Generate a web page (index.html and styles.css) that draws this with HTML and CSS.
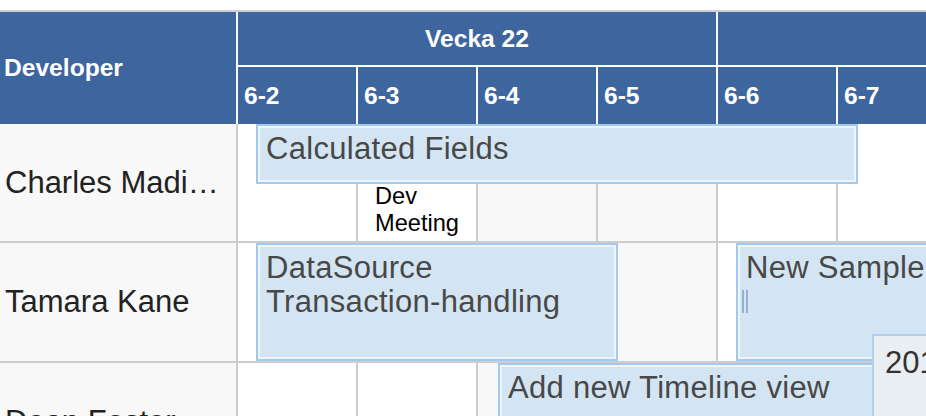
FILE: index.html
```html
<!DOCTYPE html>
<html lang="sv">
<head>
<meta charset="utf-8">
<title>Timeline</title>
<link rel="stylesheet" href="styles.css">
</head>
<body>
<div class="scheduler">
  <div class="header">
    <div class="dev-head">Developer</div>
    <div class="week w22">Vecka 22</div>
    <div class="week w23"></div>
    <div class="day">6-2</div>
    <div class="day">6-3</div>
    <div class="day">6-4</div>
    <div class="day">6-5</div>
    <div class="day">6-6</div>
    <div class="day">6-7</div>
  </div>
  <div class="body">
    <div class="row r1">
      <div class="name"><span>Charles Madison</span></div>
      <div class="cell"></div><div class="cell"></div><div class="cell we"></div><div class="cell we"></div>
      <div class="cell"></div><div class="cell"></div>
      <div class="events">
        <div class="event ev-calc">Calculated Fields</div>
        <div class="meeting">Dev Meeting</div>
      </div>
    </div>
    <div class="row r2">
      <div class="name"><span>Tamara Kane</span></div>
      <div class="cell"></div><div class="cell"></div><div class="cell we"></div><div class="cell we"></div>
      <div class="cell"></div><div class="cell"></div>
      <div class="events">
        <div class="event ev-ds">DataSource Transaction-handling</div>
        <div class="event ev-sample">New Sample<i class="handle"></i></div>
      </div>
    </div>
    <div class="row r3">
      <div class="name"><span>Dean Foster</span></div>
      <div class="cell"></div><div class="cell"></div><div class="cell we"></div><div class="cell we"></div>
      <div class="cell"></div><div class="cell"></div>
      <div class="events">
        <div class="event ev-tl">Add new Timeline view</div>
      </div>
    </div>
  </div>
  <div class="tip">2016-06-06</div>
</div>
</body>
</html>
```
FILE: styles.css
```css
* { box-sizing: border-box; }
html, body { margin: 0; padding: 0; background: #fff; }
body {
  width: 926px;
  height: 416px;
  overflow: hidden;
  font-family: "Liberation Sans", Arial, sans-serif;
}
.scheduler {
  position: relative;
  margin-top: 10px;
  width: 956px;
  border-top: 2px solid #cdcdcd;
}
.header {
  display: grid;
  grid-template-columns: 236px repeat(6, 118px);
  grid-template-rows: 53px 57px;
  gap: 2px;
  background: #fff;
}
.header > div {
  background: #3d659e;
  color: #fff;
  font-weight: bold;
  font-size: 24.6px;
  display: flex;
  align-items: center;
}
.dev-head { grid-row: 1 / 3; padding-left: 4px; }
.week { justify-content: center; }
.w22 { grid-column: 2 / 6; }
.w23 { grid-column: 6 / 8; }
.day { padding-left: 6px; }

.body {
  display: grid;
  row-gap: 2px;
  background: #cdcdcd;
}
.row {
  position: relative;
  display: grid;
  grid-template-columns: 236px repeat(6, 118px);
  column-gap: 2px;
}
.r1 { height: 117px; }
.r2, .r3 { height: 118px; }
.name {
  background: #f8f8f8;
  color: #222;
  font-size: 31px;
  padding: 0 12px 0 5px;
  display: flex;
  align-items: center;
  min-width: 0;
}
.name span {
  min-width: 0;
  white-space: nowrap;
  overflow: hidden;
  text-overflow: ellipsis;
}
.cell { background: #fff; }
.cell.we { background: #f8f8f8; }

.events {
  position: absolute;
  left: 238px;
  top: 0;
  right: 0;
  bottom: 0;
}
.event {
  position: absolute;
  top: 0;
  border: 2px solid #a3c9ef;
  box-shadow: inset 0 0 0 2px #eef5fc;
  background: #d3e5f3;
  color: #484848;
  font-size: 31px;
  letter-spacing: 0.3px;
  line-height: 34px;
  padding: 6px 8px;
  overflow: hidden;
}
.ev-calc { left: 18px; width: 602px; height: 60px; }
.ev-ds { left: 18px; width: 362px; height: 118px; }
.ev-sample { left: 498px; width: 400px; height: 118px; white-space: nowrap; }
.ev-tl { left: 260px; width: 560px; height: 130px; white-space: nowrap; }
.handle {
  position: absolute;
  left: 4px;
  top: 45px;
  width: 6px;
  height: 23px;
  border-left: 2px solid #9aaed0;
  border-right: 2px solid #9aaed0;
}
.meeting {
  position: absolute;
  left: 137px;
  top: 59px;
  width: 100px;
  font-size: 23.6px;
  line-height: 27px;
  color: #000;
}
.tip {
  position: absolute;
  left: 872px;
  top: 322px;
  width: 180px;
  height: 120px;
  background: #e9eef3;
  border-top: 2px solid #b4d1eb;
  border-left: 2px solid #b4d1eb;
  padding: 10px 0 0 11px;
  font-size: 31px;
  line-height: 34px;
  color: #333;
  white-space: nowrap;
}
```
